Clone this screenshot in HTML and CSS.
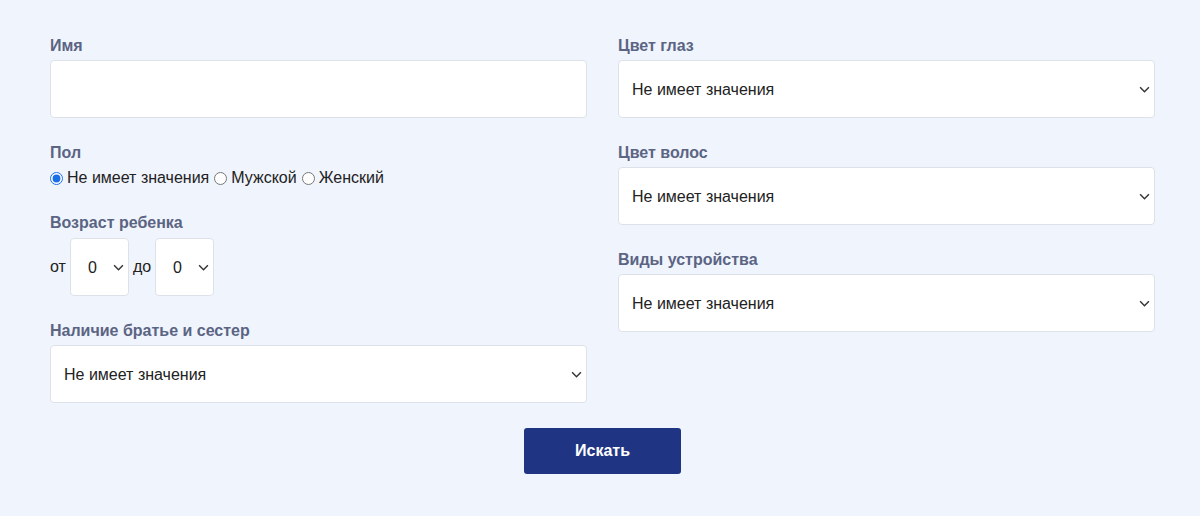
FILE: index.html
```html
<!DOCTYPE html>
<html lang="ru">
<head>
    <meta charset="UTF-8">
    <meta name="viewport" content="width=device-width, initial-scale=1.0">
    <title>Поиск</title>
    <link rel="stylesheet" href="styles.css">
</head>
<body>
    <form class="search-form" onsubmit="return false">
        <div class="columns">
            <div class="column">
                <div class="field">
                    <label class="field-label" for="name">Имя</label>
                    <input type="text" id="name" class="input-field">
                </div>
                <div class="field">
                    <span class="field-label">Пол</span>
                    <div class="radio-row">
                        <label class="radio"><input type="radio" name="sex" checked> Не имеет значения</label>
                        <label class="radio"><input type="radio" name="sex"> Мужской</label>
                        <label class="radio"><input type="radio" name="sex"> Женский</label>
                    </div>
                </div>
                <div class="field">
                    <span class="field-label">Возраст ребенка</span>
                    <div class="age-row">
                        <span>от</span>
                        <div class="select-wrap select-small">
                            <select class="select-field"><option>0</option></select>
                            <svg class="chevron" viewBox="0 0 10 6"><path d="M1 1l4 4 4-4"/></svg>
                        </div>
                        <span>до</span>
                        <div class="select-wrap select-small">
                            <select class="select-field"><option>0</option></select>
                            <svg class="chevron" viewBox="0 0 10 6"><path d="M1 1l4 4 4-4"/></svg>
                        </div>
                    </div>
                </div>
                <div class="field">
                    <label class="field-label" for="siblings">Наличие братье и сестер</label>
                    <div class="select-wrap">
                        <select id="siblings" class="select-field"><option>Не имеет значения</option></select>
                        <svg class="chevron" viewBox="0 0 10 6"><path d="M1 1l4 4 4-4"/></svg>
                    </div>
                </div>
            </div>
            <div class="column">
                <div class="field">
                    <label class="field-label" for="eyes">Цвет глаз</label>
                    <div class="select-wrap">
                        <select id="eyes" class="select-field"><option>Не имеет значения</option></select>
                        <svg class="chevron" viewBox="0 0 10 6"><path d="M1 1l4 4 4-4"/></svg>
                    </div>
                </div>
                <div class="field">
                    <label class="field-label" for="hair">Цвет волос</label>
                    <div class="select-wrap">
                        <select id="hair" class="select-field"><option>Не имеет значения</option></select>
                        <svg class="chevron" viewBox="0 0 10 6"><path d="M1 1l4 4 4-4"/></svg>
                    </div>
                </div>
                <div class="field">
                    <label class="field-label" for="device">Виды устройства</label>
                    <div class="select-wrap">
                        <select id="device" class="select-field"><option>Не имеет значения</option></select>
                        <svg class="chevron" viewBox="0 0 10 6"><path d="M1 1l4 4 4-4"/></svg>
                    </div>
                </div>
            </div>
        </div>
        <div class="actions">
            <button type="submit" class="button">Искать</button>
        </div>
    </form>
</body>
</html>
```

FILE: styles.css
```css
/* General styling */
body {
    font-family: "Liberation Sans", Arial, sans-serif;
    margin: 0;
    background-color: #f0f4fd;
    color: #222;
}
.search-form {
    padding: 37px 45px 0 50px;
}
.columns {
    display: grid;
    grid-template-columns: 1fr 1fr;
    column-gap: 31px;
}
.field {
    display: flex;
    flex-direction: column;
    margin-bottom: 26px;
}
.field-label {
    display: block;
    font-size: 16px;
    line-height: 18px;
    font-weight: bold;
    color: #5b6483;
    margin-bottom: 5px;
}
.input-field, .select-field {
    box-sizing: border-box;
    width: 100%;
    height: 58px;
    background-color: #fff;
    border: 1px solid #dde2ea;
    border-radius: 4px;
    font-family: inherit;
    font-size: 16px;
    color: #222;
    padding: 0 30px 0 13px;
    outline: none;
}
.select-field {
    -webkit-appearance: none;
    appearance: none;
}
.select-wrap {
    position: relative;
}
.chevron {
    position: absolute;
    right: 5px;
    top: 26px;
    width: 11px;
    height: 7px;
    fill: none;
    stroke: #333;
    stroke-width: 1.3;
    pointer-events: none;
}
.radio-row {
    display: flex;
    align-items: center;
    font-size: 16px;
    line-height: 20px;
    margin-top: 1px;
}
.radio {
    display: flex;
    align-items: center;
    margin-right: 5px;
}
.radio input {
    width: 13px;
    height: 13px;
    margin: 0 4px 0 0;
    accent-color: #1a6fe6;
}
.age-row {
    display: flex;
    align-items: center;
    gap: 4px;
    font-size: 16px;
    margin-top: 1px;
}
.select-small {
    width: 59px;
}
.select-small .select-field {
    padding: 0 0 0 17px;
}
.actions {
    display: flex;
    justify-content: center;
    margin-top: -1px;
}
.button {
    width: 157px;
    height: 46px;
    background-color: #1f3584;
    color: #fff;
    font-family: inherit;
    font-size: 16px;
    font-weight: bold;
    border: none;
    border-radius: 3px;
    cursor: pointer;
}
```
